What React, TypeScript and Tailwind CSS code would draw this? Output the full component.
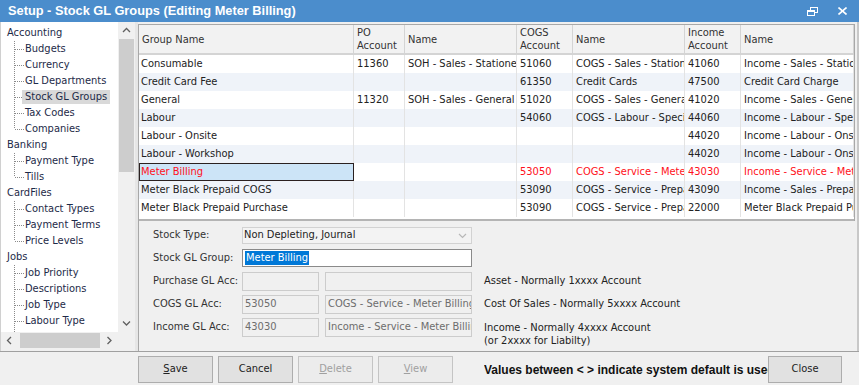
import React from "react";

const BODY = "font-['DejaVu_Sans_Condensed','DejaVu_Sans',sans-serif] text-[11px]";

type Row = { g: string; po?: string; pn?: string; c?: string; cn?: string; i?: string; iname?: string; red?: boolean; sel?: boolean };

const rows: Row[] = [
  { g: "Consumable", po: "11360", pn: "SOH - Sales - Stationery", c: "51060", cn: "COGS - Sales - Stationery", i: "41060", iname: "Income - Sales - Stationery" },
  { g: "Credit Card Fee", c: "61350", cn: "Credit Cards", i: "47500", iname: "Credit Card Charge" },
  { g: "General", po: "11320", pn: "SOH - Sales - General", c: "51020", cn: "COGS - Sales - General", i: "41020", iname: "Income - Sales - General" },
  { g: "Labour", c: "54060", cn: "COGS - Labour - Specialist", i: "44060", iname: "Income - Labour - Specialist" },
  { g: "Labour - Onsite", i: "44020", iname: "Income - Labour - Onsite" },
  { g: "Labour - Workshop", i: "44020", iname: "Income - Labour - Onsite" },
  { g: "Meter Billing", c: "53050", cn: "COGS - Service - Meter Billing", i: "43030", iname: "Income - Service - Meter Billing", red: true, sel: true },
  { g: "Meter Black Prepaid COGS", c: "53090", cn: "COGS - Service - Prepaid", i: "43090", iname: "Income - Sales - Prepaid" },
  { g: "Meter Black Prepaid Purchase", c: "53090", cn: "COGS - Service - Prepaid", i: "22000", iname: "Meter Black Prepaid Purchase" },
];

const tree = [
  { label: "Accounting", children: ["Budgets", "Currency", "GL Departments", "Stock GL Groups", "Tax Codes", "Companies"], last: true },
  { label: "Banking", children: ["Payment Type", "Tills"], last: true },
  { label: "CardFiles", children: ["Contact Types", "Payment Terms", "Price Levels"], last: true },
  { label: "Jobs", children: ["Job Priority", "Descriptions", "Job Type", "Labour Type", "Job Status"], last: false },
];

function Connector({ last }: { last: boolean }) {
  return (
    <svg width="18" height="16" className="shrink-0" shapeRendering="crispEdges">
      <line x1="7.5" y1="0" x2="7.5" y2={last ? 8 : 16} stroke="#8a8a8a" strokeDasharray="1 1" />
      <line x1="8" y1="8.5" x2="17" y2="8.5" stroke="#8a8a8a" strokeDasharray="1 1" />
    </svg>
  );
}

function Chevron({ dir }: { dir: "up" | "down" | "left" | "right" }) {
  const pts: Record<string, string> = {
    up: "1,5 4.5,1.5 8,5",
    down: "1,1.5 4.5,5 8,1.5",
    left: "5,1 1.5,4.5 5,8",
    right: "1.5,1 5,4.5 1.5,8",
  };
  const vertical = dir === "up" || dir === "down";
  return (
    <svg width={vertical ? 9 : 7} height={vertical ? 7 : 9}>
      <polyline points={pts[dir]} fill="none" stroke="#606060" strokeWidth="1.3" />
    </svg>
  );
}

function Tree() {
  return (
    <div className="w-[135px] h-full flex flex-col bg-white border-l border-[#d0d0d0]">
      <div className="flex flex-1 min-h-0">
        <div className="flex-1 overflow-hidden pt-[3px] text-[#1d2a48]">
          {tree.map((n) => (
            <div key={n.label}>
              <div className="h-[16px] pl-[6px] flex items-center whitespace-nowrap">{n.label}</div>
              {n.children.map((c, idx) => (
                <div key={c} className="h-[16px] pl-[6px] flex items-center whitespace-nowrap">
                  <Connector last={n.last && idx === n.children.length - 1} />
                  <span className={c === "Stock GL Groups" ? "bg-[#d9d9d9] px-[3px] -ml-[3px] h-[14px] flex items-center" : ""}>{c}</span>
                </div>
              ))}
            </div>
          ))}
        </div>
        <div className="w-[17px] bg-[#f0f0f0] flex flex-col items-center">
          <div className="h-[17px] flex items-center justify-center"><Chevron dir="up" /></div>
          <div className="w-[15px] h-[133px] bg-[#cdcdcd]" />
          <div className="flex-1" />
          <div className="h-[17px] flex items-center justify-center"><Chevron dir="down" /></div>
        </div>
      </div>
      <div className="h-[17px] flex bg-[#f0f0f0]">
        <div className="flex-1 flex items-center">
          <div className="w-[17px] flex justify-center"><Chevron dir="left" /></div>
          <div className="w-[80px] h-[15px] bg-[#cdcdcd] ml-[2px]" />
          <div className="flex-1 flex justify-center"><Chevron dir="right" /></div>
        </div>
        <div className="w-[17px] bg-[#f0f0f0]" />
      </div>
      <div className="h-[2px] bg-[#f0f0f0]" />
    </div>
  );
}

function Cell({ children, red, first, w }: { children?: React.ReactNode; red?: boolean; first?: boolean; w: string }) {
  return (
    <div className={`${w} h-full border-r border-[#e3e3e3] overflow-hidden whitespace-nowrap flex items-center ${first ? "pl-[2px]" : "pl-[3px]"} ${red ? "text-[#ff1020]" : "text-[#222]"}`}>
      {children}
    </div>
  );
}

function Table() {
  const widths = ["w-[215px]", "w-[51px]", "w-[112px]", "w-[56px]", "w-[112px]", "w-[56px]", "w-[113px]"];
  const heads: React.ReactNode[] = [
    "Group Name",
    <>PO<br />Account</>,
    "Name",
    <>COGS<br />Account</>,
    "Name",
    <>Income<br />Account</>,
    "Name",
  ];
  return (
    <div className="h-[197px] w-[717px] bg-white border-t border-l border-r border-[#a8a8a8] flex flex-col">
      <div className="h-[30px] flex bg-[#f2f2f2] border-b-2 border-[#d4d4d4]">
        {heads.map((h, i) => (
          <div key={i} className={`${widths[i]} h-full border-r border-[#d4d4d4] flex items-center pl-[3px] leading-[13px] text-[#333]`}>{h}</div>
        ))}
      </div>
      {rows.map((r, i) => (
        <div key={i} className={`h-[18px] flex ${i % 2 === 1 ? "bg-[#eff3f9]" : "bg-white"}`}>
          {r.sel ? (
            <div className="w-[215px] h-full border border-[#2a2020] bg-[#cce4f7] text-[#ff1020] flex items-center pl-[1px] overflow-hidden whitespace-nowrap">{r.g}</div>
          ) : (
            <Cell w={widths[0]} first red={r.red}>{r.g}</Cell>
          )}
          <Cell w={widths[1]} red={r.red}>{r.po}</Cell>
          <Cell w={widths[2]} red={r.red}>{r.pn}</Cell>
          <Cell w={widths[3]} red={r.red}>{r.c}</Cell>
          <Cell w={widths[4]} red={r.red}>{r.cn}</Cell>
          <Cell w={widths[5]} red={r.red}>{r.i}</Cell>
          <Cell w={widths[6]} red={r.red}>{r.iname}</Cell>
        </div>
      ))}
      <div className="flex-1" />
      <div className="h-[2px] bg-[#b4b4b4]" />
    </div>
  );
}

function Field({ w, children, focus }: { w: string; children?: React.ReactNode; focus?: boolean }) {
  return (
    <div className={`${w} h-full border ${focus ? "border-[#8a8a8a] bg-white" : "border-[#cccccc] bg-[#f0f0f0] text-[#6d6d6d]"} flex items-center pl-[2px] overflow-hidden whitespace-nowrap`}>
      {children}
    </div>
  );
}

function Form() {
  return (
    <div className="flex-1 bg-[#f0f0f0] border-l border-[#a8a8a8] pl-[14px] pt-[6px] text-[#333]">
      <div className="h-[17px] flex items-center">
        <div className="w-[89px]">Stock Type:</div>
        <div className="w-[230px] h-full border border-[#d2d2d2] bg-[#f3f3f3] flex items-center pl-[1px]">
          <span className="flex-1 text-[#222]">Non Depleting, Journal</span>
          <span className="w-[17px] h-full flex items-center justify-center">
            <svg width="9" height="6"><polyline points="1,1 4.5,4.5 8,1" fill="none" stroke="#b8b8b8" strokeWidth="1.2" /></svg>
          </span>
        </div>
      </div>
      <div className="h-[18px] mt-[5px] flex items-center">
        <div className="w-[89px]">Stock GL Group:</div>
        <Field w="w-[230px]" focus>
          <span className="bg-[#0078d7] text-white px-[1px] leading-[14px]">Meter Billing</span>
        </Field>
      </div>
      <div className="h-[19px] mt-[5px] flex items-center">
        <div className="w-[89px]">Purchase GL Acc:</div>
        <Field w="w-[77px]" />
        <div className="w-[6px]" />
        <Field w="w-[147px]" />
        <div className="ml-[12px] text-[#222]">Asset - Normally 1xxxx Account</div>
      </div>
      <div className="h-[19px] mt-[4px] flex items-center">
        <div className="w-[89px]">COGS GL Acc:</div>
        <Field w="w-[77px]">53050</Field>
        <div className="w-[6px]" />
        <Field w="w-[147px]">COGS - Service - Meter Billing</Field>
        <div className="ml-[12px] text-[#222]">Cost Of Sales - Normally 5xxxx Account</div>
      </div>
      <div className="h-[19px] mt-[4px] flex items-start">
        <div className="w-[89px] h-full flex items-center">Income GL Acc:</div>
        <Field w="w-[77px]">43030</Field>
        <div className="w-[6px]" />
        <Field w="w-[147px]">Income - Service - Meter Billing</Field>
        <div className="ml-[12px] mt-[3px] leading-[13px] text-[#222] whitespace-nowrap">
          Income - Normally 4xxxx Account<br />(or 2xxxx for Liabilty)
        </div>
      </div>
    </div>
  );
}

function Btn({ children, disabled, w = "w-[75px]" }: { children: React.ReactNode; disabled?: boolean; w?: string }) {
  return (
    <div className={`${w} h-[27px] border flex items-center justify-center ${disabled ? "border-[#c4c4c4] bg-[#ececec] text-[#a0a0a0]" : "border-[#adadad] bg-[#e1e1e1] text-[#222]"}`}>
      {children}
    </div>
  );
}

export default function App() {
  return (
    <div className={`w-[859px] h-[385px] bg-[#f0f0f0] flex flex-col overflow-hidden ${BODY}`}>
      <div className="h-[22px] bg-[#4b8dcc] flex items-center pl-[8px] pr-[12px] text-white">
        <div className="flex-1 font-['Liberation_Sans',sans-serif] font-bold text-[12.8px]">Setup - Stock GL Groups (Editing Meter Billing)</div>
        <svg width="11" height="9" className="mr-[20px]" shapeRendering="crispEdges">
          <rect x="3.5" y="0.5" width="7" height="5" fill="none" stroke="white" />
          <rect x="0.5" y="3.5" width="7" height="5" fill="#4b8dcc" stroke="white" />
          <line x1="0" y1="4.5" x2="8" y2="4.5" stroke="white" />
        </svg>
        <svg width="9" height="8">
          <line x1="0.5" y1="0.5" x2="8.5" y2="7.5" stroke="white" strokeWidth="1.6" />
          <line x1="8.5" y1="0.5" x2="0.5" y2="7.5" stroke="white" strokeWidth="1.6" />
        </svg>
      </div>
      <div className="h-[329px] flex border-r-2 border-[#c8c8c8]">
        <Tree />
        <div className="w-[3px] bg-[#e6e6e6]" />
        <div className="flex-1 flex flex-col pt-[2px] bg-[#f0f0f0]">
          <Table />
          <Form />
        </div>
      </div>
      <div className="h-[34px] border-t border-[#a0a0a0] flex items-start pt-[4px] pl-[138px]">
        <div className="flex gap-[5px]">
          <Btn><span><span className="underline">S</span>ave</span></Btn>
          <Btn>Cancel</Btn>
          <Btn disabled><span><span className="underline">D</span>elete</span></Btn>
          <Btn disabled><span><span className="underline">V</span>iew</span></Btn>
        </div>
        <div className="ml-[31px] w-[284px] h-[27px] flex items-center overflow-hidden whitespace-nowrap font-['Liberation_Sans',sans-serif] font-bold text-[12px] text-[#111]">
          Values between &lt; &gt; indicate system default is used
        </div>
        <Btn w="w-[74px]">Close</Btn>
      </div>
    </div>
  );
}
